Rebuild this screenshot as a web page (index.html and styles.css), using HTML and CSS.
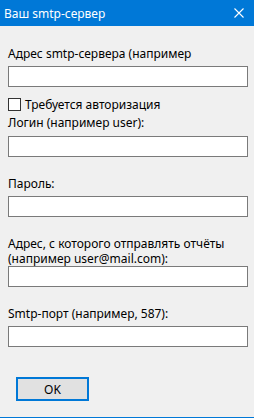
FILE: index.html
```html
<!DOCTYPE html>
<html>
  <head>
    <meta charset="utf-8">
    <title>Ваш smtp-сервер</title>
    <link rel="stylesheet" href="styles.css">
  </head>
  <body>
    <div class="window">
      <div class="titlebar">
        <div class="title">Ваш smtp-сервер</div>
        <div class="close">
          <svg width="10" height="10" viewBox="0 0 10 10"><path d="M0.5 0.5L9.5 9.5M9.5 0.5L0.5 9.5" stroke="#fff" stroke-width="1.1" fill="none"/></svg>
        </div>
      </div>
      <div class="content">
        <div class="label first">Адрес smtp-сервера (например</div>
        <input class="field" type="text">

        <label class="check">
          <span class="box"></span>
          <span>Требуется авторизация</span>
        </label>
        <div class="label login">Логин (например user):</div>
        <input class="field" type="text">

        <div class="label gap">Пароль:</div>
        <input class="field" type="password">

        <div class="label gap two">Адрес, с которого отправлять отчёты<br>(например user@mail.com):</div>
        <input class="field" type="text">

        <div class="label gap">Smtp-порт (например, 587):</div>
        <input class="field" type="text">

        <div class="buttons">
          <button class="ok">OK</button>
        </div>
      </div>
    </div>
  </body>
</html>
```

FILE: styles.css
```css
* {
  margin: 0;
  padding: 0;
  box-sizing: border-box;
}
body {
  background: #f0f0f0;
  font-family: "Noto Sans", "Liberation Sans", sans-serif;
  font-size: 12px;
  color: #000;
}
.window {
  height: 418px;
  display: flex;
  flex-direction: column;
  border-bottom: 1px solid #0078d7;
}
.titlebar {
  height: 26px;
  background: #0078d7;
  color: #fff;
  display: flex;
  align-items: center;
  justify-content: space-between;
  padding: 0 10px 0 4px;
}
.title {
  font-size: 12px;
  line-height: 15px;
}
.close {
  width: 10px;
  height: 10px;
  display: flex;
}
.content {
  padding: 0 6px 0 8px;
  display: flex;
  flex-direction: column;
}
.label {
  line-height: 15px;
  margin-bottom: 5px;
}
.label.first {
  margin-top: 20px;
}
.label.login {
  margin-top: 3px;
  margin-bottom: 6px;
}
.label.gap {
  margin-top: 19px;
}
.label.two {
  margin-bottom: 0;
}
.field {
  width: 240px;
  height: 21px;
  border: 1px solid #7a7a7a;
  background: #fff;
  font: inherit;
  outline: none;
}
.check {
  margin-top: 10px;
  display: flex;
  align-items: center;
  gap: 4px;
  line-height: 15px;
}
.check .box {
  width: 13px;
  height: 13px;
  border: 1px solid #333;
  background: #fff;
}
.buttons {
  margin-top: 30px;
  padding-left: 8px;
}
.ok {
  width: 73px;
  height: 24px;
  background: #e1e1e1;
  border: 2px solid #0078d7;
  font: inherit;
  color: #000;
}
```
